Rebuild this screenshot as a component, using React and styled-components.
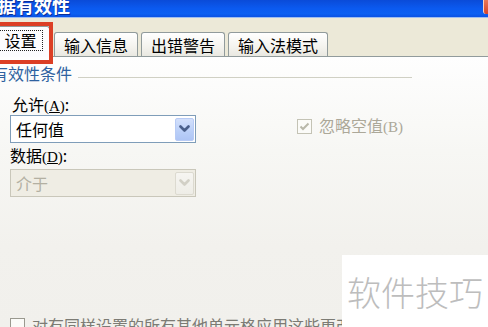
import React from "react";
import styled, { createGlobalStyle } from "styled-components";

const Global = createGlobalStyle`
  html, body { margin: 0; padding: 0; background: #fff; }
  body { font-family: "Noto Sans CJK SC", "Noto Sans", sans-serif; }
`;

const Window = styled.div`
  position: relative;
  width: 488px;
  height: 327px;
  overflow: hidden;
  display: flex;
  flex-direction: column;
  font-family: "Noto Sans CJK SC", "Noto Sans", sans-serif;
  font-size: 16px;
  color: #000;
`;

const TitleBar = styled.div`
  height: 17px;
  flex: none;
  display: flex;
  align-items: flex-start;
  overflow: hidden;
  background: linear-gradient(#0a4bd8 0%, #0b5af0 50%, #0c60f2 80%, #0a52e4 100%);
  border-bottom: 1px solid #9fbef0;
`;

const Title = styled.div`
  color: #fff;
  font-weight: 700;
  font-size: 18px;
  line-height: 24px;
  margin-top: -7px;
  margin-left: -2px;
  letter-spacing: 0px;
  text-shadow: 1px 1px 0 #0a2f9a;
`;

const CloseEdge = styled.div`
  margin-left: auto;
  width: 4px;
  height: 14px;
  background: linear-gradient(#e8775a, #d4452a);
  border-left: 1px solid #f6d2c4;
  border-bottom-left-radius: 3px;
`;

const TabStrip = styled.div`
  flex: none;
  height: 39px;
  box-sizing: border-box;
  background: #ece9d8;
  border-bottom: 1px solid #919b9c;
  display: flex;
  align-items: flex-end;
  gap: 3px;
`;

const Tab = styled.div`
  position: relative;
  box-sizing: border-box;
  height: ${(p) => (p.$active ? "31px" : "24px")};
  margin-bottom: ${(p) => (p.$active ? "-1px" : "0")};
  margin-left: ${(p) => (p.$active ? "-12px" : "0")};
  width: ${(p) => (p.$active ? "62px" : "auto")};
  margin-right: ${(p) => (p.$active ? "1px" : "0")};
  padding: ${(p) => (p.$active ? "0 0 4px 0" : "0 9px")};
  display: flex;
  align-items: center;
  justify-content: center;
  border: 1px solid #919b9c;
  border-bottom: ${(p) => (p.$active ? "none" : "none")};
  border-radius: 3px 3px 0 0;
  background: ${(p) =>
    p.$active ? "#fcfcfe" : "linear-gradient(#ffffff, #f4f3ee 60%, #e9e8e1)"};
  z-index: ${(p) => (p.$active ? 1 : 0)};
  line-height: 18px;
  white-space: nowrap;
`;

const Focus = styled.span`
  border: 1px dotted #222;
  padding: 1px 5px 1px 8px;
  line-height: 17px;
`;

const Highlight = styled.div`
  position: absolute;
  left: -4px;
  top: 22px;
  width: 57px;
  height: 42px;
  box-sizing: border-box;
  border: 4px solid #dc3f25;
  z-index: 5;
`;

const Panel = styled.div`
  flex: 1;
  display: flex;
  flex-direction: column;
  padding-top: 8px;
  background: linear-gradient(#fefefe 0%, #f7f7f4 35%, #f2f1ed 70%, #f1f0ec 100%);
`;

const GroupHeader = styled.div`
  display: flex;
  align-items: center;
  height: 16px;
  margin-left: -8px;
  width: 420px;
`;

const GroupLabel = styled.span`
  color: #2f62a0;
  line-height: 16px;
`;

const GroupLine = styled.div`
  flex: 1;
  height: 1px;
  margin: 8px 0 0 6px;
  background: #d0d0c4;
`;

const Body = styled.div`
  display: grid;
  grid-template-columns: 186px 1fr;
  padding-left: 10px;
  margin-top: 15px;
`;

const Column = styled.div`
  display: flex;
  flex-direction: column;
`;

const Label = styled.div`
  line-height: 16px;
  height: 16px;
  margin-left: ${(p) => p.$indent || 0}px;
  margin-top: ${(p) => p.$top || 0}px;
  white-space: nowrap;
`;

const Key = styled.span`
  font-family: "Liberation Serif", serif;
  font-size: 15px;
  u { text-decoration-thickness: 1px; }
`;

const Select = styled.div`
  box-sizing: border-box;
  height: 28px;
  margin-top: ${(p) => p.$top || 0}px;
  border: 1px solid ${(p) => (p.$disabled ? "#c9c7ba" : "#7f9db9")};
  background: ${(p) => (p.$disabled ? "#efede4" : "#fff")};
  color: ${(p) => (p.$disabled ? "#b3b0a2" : "#000")};
  display: flex;
  align-items: center;
  padding: 1px 1px 1px 5px;
`;

const SelectValue = styled.span`
  flex: 1;
  line-height: 18px;
`;

const DropButton = styled.div`
  width: 19px;
  height: 23px;
  box-sizing: border-box;
  display: flex;
  align-items: center;
  justify-content: center;
  border: 1px solid ${(p) => (p.$disabled ? "#dcdad0" : "#b8cbf5")};
  border-radius: 2px;
  background: ${(p) =>
    p.$disabled
      ? "linear-gradient(#f6f5f1, #eeede7)"
      : "linear-gradient(#d3e0fb, #bacff8 60%, #aec5f5)"};
`;

const CheckRow = styled.div`
  display: flex;
  align-items: center;
  gap: 7px;
  margin-top: ${(p) => p.$top || 0}px;
  margin-left: ${(p) => p.$left || 0}px;
  color: ${(p) => p.$color || "#aca899"};
  white-space: nowrap;
  line-height: 16px;
`;

const Box = styled.div`
  width: 15px;
  height: 15px;
  box-sizing: border-box;
  border: 1px solid ${(p) => p.$color || "#c4c3b5"};
  background: #fbfbf8;
  display: flex;
  align-items: center;
  justify-content: center;
  flex: none;
`;

const Bottom = styled.div`
  margin-top: auto;
  margin-bottom: -6px;
  padding-left: 10px;
`;

const Watermark = styled.div`
  position: absolute;
  right: 0;
  bottom: 0;
  width: 146px;
  height: 72px;
  background: #fff;
  display: flex;
  align-items: center;
  padding-left: 5px;
  box-sizing: border-box;
  color: #bdbdbd;
  font-size: 34px;
  font-weight: 300;
  letter-spacing: 0px;
  z-index: 6;
`;

const Chevron = ({ color }) => (
  <svg width="11" height="8" viewBox="0 0 11 8">
    <polyline
      points="1.5,1.5 5.5,5.5 9.5,1.5"
      fill="none"
      stroke={color}
      strokeWidth="2.6"
      strokeLinecap="round"
      strokeLinejoin="round"
    />
  </svg>
);

const Check = ({ color }) => (
  <svg width="11" height="9" viewBox="0 0 11 9">
    <polyline
      points="1.5,4.5 4,7 9.5,1.5"
      fill="none"
      stroke={color}
      strokeWidth="2"
    />
  </svg>
);

export default function App() {
  return (
    <>
      <Global />
      <Window>
        <TitleBar>
          <Title>据有效性</Title>
          <CloseEdge />
        </TitleBar>
        <TabStrip>
          <Tab $active>
            <Focus>设置</Focus>
          </Tab>
          <Tab>输入信息</Tab>
          <Tab>出错警告</Tab>
          <Tab>输入法模式</Tab>
        </TabStrip>
        <Highlight />
        <Panel>
          <GroupHeader>
            <GroupLabel>有效性条件</GroupLabel>
            <GroupLine />
          </GroupHeader>
          <Body>
            <Column>
              <Label $indent={2}>
                允许<Key>(<u>A</u>)</Key>:
              </Label>
              <Select $top={3}>
                <SelectValue>任何值</SelectValue>
                <DropButton>
                  <Chevron color="#4a5f8a" />
                </DropButton>
              </Select>
              <Label $top={4}>
                数据<Key>(<u>D</u>)</Key>:
              </Label>
              <Select $top={6} $disabled>
                <SelectValue>介于</SelectValue>
                <DropButton $disabled>
                  <Chevron color="#d2d0c6" />
                </DropButton>
              </Select>
            </Column>
            <Column>
              <CheckRow $top={21} $left={101}>
                <Box>
                  <Check color="#b9b8aa" />
                </Box>
                <span>
                  忽略空值<Key>(B)</Key>
                </span>
              </CheckRow>
            </Column>
          </Body>
          <Bottom>
            <CheckRow $color="#7c7b74">
              <Box $color="#9a998f" />
              <span>对有同样设置的所有其他单元格应用这些更改</span>
            </CheckRow>
          </Bottom>
        </Panel>
        <Watermark>软件技巧</Watermark>
      </Window>
    </>
  );
}
